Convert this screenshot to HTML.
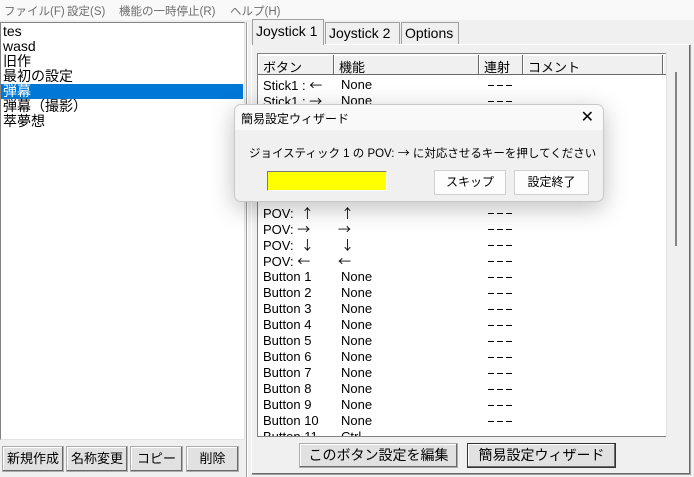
<!DOCTYPE html>
<html><head><meta charset="utf-8"><style>
*{box-sizing:border-box;margin:0;padding:0}
body{width:694px;height:477px;background:#f0f0f0;font-family:"Liberation Sans","Noto Sans CJK JP",sans-serif;font-size:13px;color:#000;position:relative;overflow:hidden}
.a{position:absolute}
.menu{left:0;top:0;width:694px;height:20px;background:#f9f9f9;color:#6d6d6d;font-size:11.5px}
.menu span{position:absolute;top:3px;white-space:nowrap}
.list{left:0;top:22px;width:245px;height:418px;background:#fff;border:1px solid #828282;border-right-color:#e3e3e3;border-bottom-color:#e3e3e3}
.list div{height:15px;line-height:15px;padding-left:2px;font-size:14px}
.sel{background:#0078d7;color:#fff;margin-right:1px}
.btn{position:absolute;background:#e1e1e1;border:1px solid #adadad;box-shadow:inset -1px -1px #696969,inset 1px 1px #fff;text-align:center;font-size:13px;white-space:nowrap}
.tab{position:absolute;top:22px;height:22px;border:1px solid #a0a0a0;border-bottom:none;background:#f0f0f0;font-size:14px;padding:2px 3px;white-space:nowrap}
.panel{left:251px;top:44px;width:440px;height:431px;border:1px solid #a0a0a0;border-top-color:#fff;border-left-color:#fff;box-shadow:inset -1px -1px #696969}
.lv{left:257px;top:53px;width:409px;height:384px;background:#fff;border:1px solid #828282;border-right:none;overflow:hidden}
.hd{position:absolute;top:1px;height:20px;background:#f0f0f0;border-right:1px solid #696969;border-bottom:1px solid #696969;box-shadow:inset 1px 1px #fff;padding:2px 5px;font-size:13px}
.row{position:absolute;left:5px;height:16px;font-size:13px;white-space:pre;width:400px}
.row span{position:absolute;top:0}
.r{font-family:"Noto Sans CJK JP",sans-serif;font-size:13px;line-height:15px;font-weight:normal}
.d{position:absolute;left:225px;top:8px;width:24px;height:1px;background:repeating-linear-gradient(90deg,#000 0 6px,transparent 6px 9px)}
.dlg{left:234px;top:104px;width:370px;height:98px;background:#f0f0f0;border:1px solid #c8c8c8;border-radius:7px;box-shadow:0 6px 24px rgba(0,0,0,.25);overflow:hidden}
.dlg .t{position:absolute;left:0;top:0;width:100%;height:25px;background:#f9f9f9;font-size:12px;padding:5px 6px}
</style></head><body>
<div class="a menu"><span style="left:4px">ファイル(F)</span><span style="left:67px">設定(S)</span><span style="left:119px">機能の一時停止(R)</span><span style="left:230px">ヘルプ(H)</span></div>
<div class="a list" style="padding-top:1px">
<div>tes</div><div>wasd</div><div>旧作</div><div>最初の設定</div><div class="sel">弾幕</div><div>弾幕（撮影）</div><div>萃夢想</div></div>
<div class="btn" style="left:2px;top:446px;width:62px;height:26px;line-height:24px">新規作成</div>
<div class="btn" style="left:66px;top:446px;width:62px;height:26px;line-height:24px">名称変更</div>
<div class="btn" style="left:130px;top:446px;width:53px;height:26px;line-height:24px">コピー</div>
<div class="btn" style="left:186px;top:446px;width:53px;height:26px;line-height:24px">削除</div>
<div class="a" style="left:246px;top:22px;width:2px;height:455px;border-left:1px solid #a0a0a0;border-right:1px solid #fff"></div>
<div class="a panel"></div>
<div class="tab" style="left:252px;top:19px;height:26px;width:72px;padding-top:3px;z-index:2">Joystick 1</div>
<div class="tab" style="left:325px;width:75px">Joystick 2</div>
<div class="tab" style="left:401px;width:58px">Options</div>
<div class="a lv">
<div class="hd" style="left:0;width:76px">ボタン</div>
<div class="hd" style="left:76px;width:145px">機能</div>
<div class="hd" style="left:221px;width:44px">連射</div>
<div class="hd" style="left:265px;width:140px">コメント</div>
<div class="hd" style="left:405px;width:10px"></div>
<div class="row" style="top:23px"><span>Stick1 : <b class="r">←</b></span><span style="left:78px">None</span><i class="d"></i></div>
<div class="row" style="top:39px"><span>Stick1 : <b class="r">→</b></span><span style="left:78px">None</span><i class="d"></i></div>
<div class="row" style="top:151px"><span>POV:  <b class="r">↑</b></span><span class="r" style="left:78px">↑</span><i class="d"></i></div>
<div class="row" style="top:167px"><span>POV: <b class="r">→</b></span><span class="r" style="left:75px">→</span><i class="d"></i></div>
<div class="row" style="top:183px"><span>POV:  <b class="r">↓</b></span><span class="r" style="left:78px">↓</span><i class="d"></i></div>
<div class="row" style="top:199px"><span>POV: <b class="r">←</b></span><span class="r" style="left:75px">←</span><i class="d"></i></div>
<div class="row" style="top:215px"><span>Button 1</span><span style="left:78px">None</span><i class="d"></i></div>
<div class="row" style="top:231px"><span>Button 2</span><span style="left:78px">None</span><i class="d"></i></div>
<div class="row" style="top:247px"><span>Button 3</span><span style="left:78px">None</span><i class="d"></i></div>
<div class="row" style="top:263px"><span>Button 4</span><span style="left:78px">None</span><i class="d"></i></div>
<div class="row" style="top:279px"><span>Button 5</span><span style="left:78px">None</span><i class="d"></i></div>
<div class="row" style="top:295px"><span>Button 6</span><span style="left:78px">None</span><i class="d"></i></div>
<div class="row" style="top:311px"><span>Button 7</span><span style="left:78px">None</span><i class="d"></i></div>
<div class="row" style="top:327px"><span>Button 8</span><span style="left:78px">None</span><i class="d"></i></div>
<div class="row" style="top:343px"><span>Button 9</span><span style="left:78px">None</span><i class="d"></i></div>
<div class="row" style="top:359px"><span>Button 10</span><span style="left:78px">None</span><i class="d"></i></div>
<div class="row" style="top:375px"><span>Button 11</span><span style="left:78px">Ctrl</span><i class="d"></i></div>
</div>
<div class="a" style="left:666px;top:53px;width:19px;height:384px;background:#f0f0f0;border-left:1px solid #e3e3e3"></div>
<div class="a" style="left:675px;top:72px;width:2px;height:174px;background:#858585"></div>
<div class="btn" style="left:299px;top:443px;width:159px;height:25px;line-height:23px;font-size:14px">このボタン設定を編集</div>
<div class="btn" style="left:467px;top:443px;width:149px;height:25px;line-height:23px;font-size:14px;border-color:#333">簡易設定ウィザード</div>
<div class="a dlg">
<div class="t">簡易設定ウィザード<span style="position:absolute;right:9px;top:2px;font-size:16px">✕</span></div>
<div class="a" style="left:14px;top:40px;font-size:11.5px;white-space:nowrap">ジョイスティック 1 の POV: <span class="r" style="font-size:12px">→</span> に対応させるキーを押してください</div>
<div class="a" style="left:32px;top:66px;width:120px;height:20px;background:#ffff00;border:1px solid #7a7a7a;border-right-color:#fff;border-bottom-color:#fff"></div>
<div class="btn" style="left:199px;top:65px;width:72px;height:25px;line-height:23px;font-size:12px;border-color:#d0d0d0;box-shadow:none;background:#fdfdfd">スキップ</div>
<div class="btn" style="left:279px;top:65px;width:75px;height:25px;line-height:23px;font-size:12px;border-color:#d0d0d0;box-shadow:none;background:#fdfdfd">設定終了</div>
</div>
</body></html>
